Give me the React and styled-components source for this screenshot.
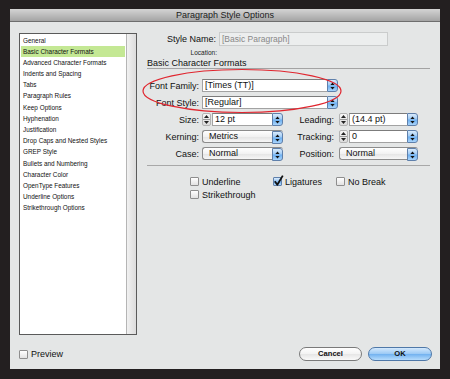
import React from 'react';
import styled, { createGlobalStyle } from 'styled-components';

const GlobalStyle = createGlobalStyle`
  html, body {
    margin: 0;
    padding: 0;
    background: #231f20;
  }
  body {
    width: 450px;
    height: 379px;
    overflow: hidden;
    font-family: "Liberation Sans", Arial, sans-serif;
    color: #111;
  }
  * { box-sizing: border-box; }
`;

const sections = [
    'General',
    'Basic Character Formats',
    'Advanced Character Formats',
    'Indents and Spacing',
    'Tabs',
    'Paragraph Rules',
    'Keep Options',
    'Hyphenation',
    'Justification',
    'Drop Caps and Nested Styles',
    'GREP Style',
    'Bullets and Numbering',
    'Character Color',
    'OpenType Features',
    'Underline Options',
    'Strikethrough Options',
];

const UpDown = () => (
    <svg width="5" height="8" viewBox="0 0 5 8">
        <path d="M2.5 0.5 L4.6 3 L0.4 3 Z" fill="#111" />
        <path d="M0.4 5 L4.6 5 L2.5 7.5 Z" fill="#111" />
    </svg>
);

const Check = () => (
    <svg width="11" height="12" viewBox="0 0 11 12">
        <path
            d="M1.8 6.2 L4.3 9.8 L9.8 0.6"
            fill="none"
            stroke="#111"
            strokeWidth="1.8"
            strokeLinejoin="round"
        />
    </svg>
);

const ComboField = ({ value, wide }) => (
    <Combo $wide={wide}>
        <FieldText>{value}</FieldText>
        <ArrowButton>
            <UpDown />
        </ArrowButton>
    </Combo>
);

const SpinCombo = ({ value }) => (
    <SpinWrap>
        <Stepper>
            <StepHalf>
                <svg width="5" height="3" viewBox="0 0 5 3">
                    <path d="M2.5 0 L5 3 L0 3 Z" fill="#222" />
                </svg>
            </StepHalf>
            <StepHalf $bottom>
                <svg width="5" height="3" viewBox="0 0 5 3">
                    <path d="M0 0 L5 0 L2.5 3 Z" fill="#222" />
                </svg>
            </StepHalf>
        </Stepper>
        <ComboField value={value} />
    </SpinWrap>
);

const PopUp = ({ value }) => (
    <PopButton>
        <PopText>{value}</PopText>
        <ArrowButton $round>
            <UpDown />
        </ArrowButton>
    </PopButton>
);

const CheckItem = ({ label, checked }) => (
    <CheckRow>
        <Box $checked={checked}>
            {checked && (
                <CheckMark>
                    <Check />
                </CheckMark>
            )}
        </Box>
        <span>{label}</span>
    </CheckRow>
);

const App = () => {
    return (
        <>
            <GlobalStyle />
            <Page>
                <Window>
                    <TitleBar>Paragraph Style Options</TitleBar>
                    <Body>
                        <Content>
                            <ListBox>
                                <Items>
                                    {sections.map((s, i) => (
                                        <Item key={s} $selected={i === 1}>
                                            {s}
                                        </Item>
                                    ))}
                                </Items>
                                <ScrollTrack />
                            </ListBox>

                            <Main>
                                <StyleNameRow>
                                    <NameLabel>Style Name:</NameLabel>
                                    <NameInput>[Basic Paragraph]</NameInput>
                                </StyleNameRow>
                                <LocationRow>Location:</LocationRow>
                                <SectionTitle>Basic Character Formats</SectionTitle>

                                <FormGrid>
                                    <Label>Font Family:</Label>
                                    <Wide>
                                        <ComboField value="[Times (TT)]" />
                                    </Wide>
                                    <Label>Font Style:</Label>
                                    <Wide>
                                        <ComboField value="[Regular]" />
                                    </Wide>

                                    <Label>Size:</Label>
                                    <SpinCombo value="12 pt" />
                                    <Label $pad={3}>Leading:</Label>
                                    <SpinCombo value="(14.4 pt)" />

                                    <Label>Kerning:</Label>
                                    <PopUp value="Metrics" />
                                    <Label $pad={3}>Tracking:</Label>
                                    <SpinCombo value="0" />

                                    <Label>Case:</Label>
                                    <PopUp value="Normal" />
                                    <Label $pad={3}>Position:</Label>
                                    <PopUp value="Normal" />
                                </FormGrid>

                                <Separator />

                                <CheckGrid>
                                    <CheckItem label="Underline" />
                                    <CheckItem label="Ligatures" checked />
                                    <CheckItem label="No Break" />
                                    <CheckItem label="Strikethrough" />
                                </CheckGrid>
                            </Main>
                        </Content>

                        <Footer>
                            <CheckItem label="Preview" />
                            <Buttons>
                                <PushButton>Cancel</PushButton>
                                <PushButton $default>OK</PushButton>
                            </Buttons>
                        </Footer>
                    </Body>

                    <Highlight width="204" height="48" viewBox="0 0 204 48">
                        <ellipse
                            cx="102"
                            cy="24"
                            rx="99"
                            ry="21.5"
                            fill="none"
                            stroke="#e0262f"
                            strokeWidth="1.2"
                        />
                    </Highlight>
                </Window>
            </Page>
        </>
    );
};

const Page = styled.div`
    padding: 9px 10px 0;
    height: 379px;
`;

const Window = styled.div`
    position: relative;
    width: 430px;
    height: 360px;
    background: #e4e6e6;
    display: flex;
    flex-direction: column;
`;

const TitleBar = styled.div`
    height: 13px;
    line-height: 12px;
    text-align: center;
    font-size: 9px;
    color: #1c1c1c;
    background: linear-gradient(#d4d4d4, #a4a4a4);
    border-bottom: 1px solid #6e6e6e;
`;

const Body = styled.div`
    flex: 1;
    display: flex;
    flex-direction: column;
    padding: 11px 0 8px 9px;
`;

const Content = styled.div`
    display: flex;
    gap: 10px;
    padding-right: 10px;
    height: 302px;
`;

const ListBox = styled.div`
    width: 118px;
    height: 302px;
    display: flex;
    background: #fff;
    border: 1px solid #5a5a5a;
`;

const Items = styled.div`
    flex: 1;
    padding-top: 0.5px;
`;

const Item = styled.div`
    height: 11.2px;
    line-height: 11.2px;
    margin: 0 1px;
    padding-left: 2px;
    font-size: 6.4px;
    color: #111;
    white-space: nowrap;
    background: ${p => (p.$selected ? '#c4e894' : 'transparent')};
`;

const ScrollTrack = styled.div`
    width: 10px;
    border-left: 1px solid #b5b5b5;
    background: linear-gradient(to right, #f1f1f1, #dcdcdc);
`;

const Main = styled.div`
    flex: 1;
    display: flex;
    flex-direction: column;
`;

const StyleNameRow = styled.div`
    margin-top: -1px;
    height: 14px;
    display: flex;
    align-items: center;
    gap: 3px;
`;

const NameLabel = styled.div`
    width: 69px;
    text-align: right;
    font-size: 9px;
    color: #111;
`;

const NameInput = styled.div`
    width: 169px;
    height: 14px;
    line-height: 12px;
    padding-left: 2px;
    font-size: 8.5px;
    color: #888;
    background: #eceeee;
    border: 1px solid #cacccc;
`;

const LocationRow = styled.div`
    margin-top: 1px;
    width: 70px;
    height: 11px;
    line-height: 11px;
    text-align: right;
    font-size: 6.5px;
    color: #222;
`;

const SectionTitle = styled.div`
    height: 11px;
    line-height: 10px;
    font-size: 9px;
    color: #111;
    border-bottom: 1px solid #a3a3a3;
`;

const FormGrid = styled.div`
    margin-top: 10px;
    display: grid;
    grid-template-columns: 53px 81px 52px 79px;
    grid-auto-rows: 13px;
    column-gap: 2px;
    row-gap: 4px;
    align-items: center;
`;

const Label = styled.div`
    text-align: right;
    padding-right: ${p => p.$pad ?? 1}px;
    font-size: 9px;
    color: #111;
    white-space: nowrap;
`;

const Wide = styled.div`
    grid-column: span 3;
    width: 136px;
`;

const Combo = styled.div`
    display: flex;
    height: 13px;
    width: 100%;
`;

const FieldText = styled.div`
    flex: 1;
    height: 13px;
    line-height: 11px;
    padding-left: 2px;
    font-size: 9px;
    color: #111;
    background: #fff;
    border: 1px solid #a2a2a2;
    border-top-color: #7c7c7c;
    border-right: none;
    white-space: nowrap;
    overflow: hidden;
`;

const ArrowButton = styled.div`
    width: 11px;
    height: 13px;
    display: flex;
    align-items: center;
    justify-content: center;
    border: 1px solid #5f80ab;
    border-radius: 0 3px 3px 0;
    background: linear-gradient(
        #d9ebfc 0%,
        #9cc9f5 48%,
        #6aaef0 52%,
        #a9d4fb 100%
    );
`;

const SpinWrap = styled.div`
    display: flex;
    align-items: center;
    height: 13px;
`;

const Stepper = styled.div`
    width: 10px;
    height: 13px;
    margin-right: 1px;
    display: flex;
    flex-direction: column;
    border: 1px solid #b3b3b3;
    border-radius: 2px;
    background: linear-gradient(#f6f6f6, #dcdcdc);
`;

const StepHalf = styled.div`
    flex: 1;
    display: flex;
    align-items: center;
    justify-content: center;
    border-top: ${p => (p.$bottom ? '1px solid #9a9a9a' : 'none')};
`;

const PopButton = styled.div`
    display: flex;
    height: 13px;
    width: 100%;
    border-radius: 3px;
    border: 1px solid #8c8c8c;
    border-right: none;
    background: linear-gradient(#ffffff 0%, #f2f2f2 50%, #e4e4e4 52%, #f6f6f6 100%);
`;

const PopText = styled.div`
    flex: 1;
    line-height: 11px;
    padding-left: 6px;
    font-size: 9px;
    color: #111;
`;

const Separator = styled.div`
    margin-top: 5px;
    height: 1px;
    background: #a8a8a8;
`;

const CheckGrid = styled.div`
    margin-top: 11px;
    padding-left: 43px;
    display: grid;
    grid-template-columns: 83px 63px auto;
    grid-auto-rows: 9px;
    row-gap: 4px;
    align-items: center;
`;

const CheckRow = styled.div`
    display: flex;
    align-items: center;
    gap: 3px;
    font-size: 9px;
    color: #111;
    white-space: nowrap;
`;

const Box = styled.div`
    position: relative;
    width: 9px;
    height: 9px;
    border: 1px solid ${p => (p.$checked ? '#5f80ab' : '#8e8e8e')};
    border-radius: 1px;
    background: ${p =>
        p.$checked
            ? 'linear-gradient(#d9ebfc, #8fc0f3 50%, #6aaef0 52%, #b1d8fb)'
            : 'linear-gradient(#ffffff, #e2e2e2)'};
`;

const CheckMark = styled.div`
    position: absolute;
    left: -1px;
    top: -3px;
    line-height: 0;
`;

const Footer = styled.div`
    margin-top: 12px;
    height: 14px;
    display: flex;
    align-items: center;
    justify-content: space-between;
    padding-right: 8px;
`;

const Buttons = styled.div`
    display: flex;
    gap: 6px;
`;

const PushButton = styled.div`
    width: ${p => (p.$default ? 64 : 63)}px;
    height: 14px;
    line-height: 12px;
    text-align: center;
    font-size: 7.6px;
    font-weight: bold;
    color: #111;
    border-radius: 7px;
    border: 1px solid ${p => (p.$default ? '#4f78a8' : '#7a7a7a')};
    background: ${p =>
        p.$default
            ? 'linear-gradient(#d3e8fc 0%, #9ccaf5 48%, #72b2f0 52%, #b6dcfc 100%)'
            : 'linear-gradient(#ffffff 0%, #f3f3f3 48%, #e6e6e6 52%, #fafafa 100%)'};
`;

const Highlight = styled.svg`
    position: absolute;
    left: 130px;
    top: 58px;
    pointer-events: none;
`;

export default App;
